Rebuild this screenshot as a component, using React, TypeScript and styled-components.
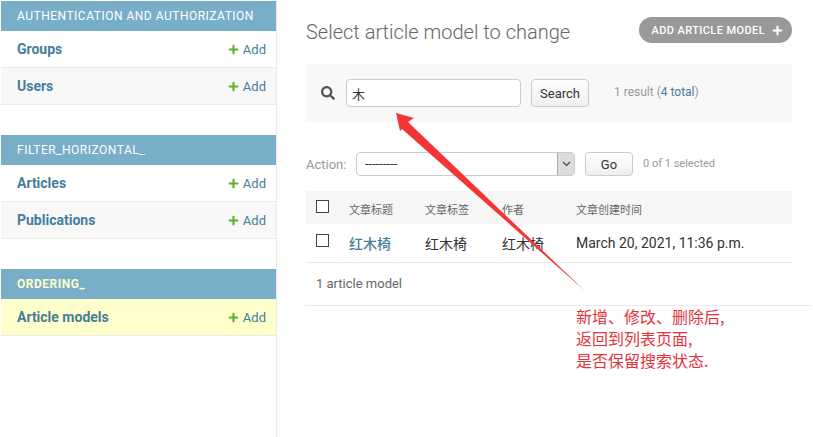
import React from 'react'
import styled, { createGlobalStyle } from 'styled-components'
import { FaPlus, FaSearch } from 'react-icons/fa'

const GlobalStyle = createGlobalStyle`
  html, body {
    margin: 0;
    padding: 0;
    background: #fff;
    overflow: hidden;
  }
  body {
    font-family: Roboto, "Noto Sans CJK SC", sans-serif;
    color: #333;
  }
`

const Page = styled.div`
  position: relative;
  display: flex;
  width: 813px;
  height: 437px;
  overflow: hidden;
`

const Sidebar = styled.nav`
  box-sizing: border-box;
  flex: 0 0 277px;
  padding: 1px 0 0 1px;
  border-right: 1px solid #eaeaea;
`

const Module = styled.section`
  margin-bottom: 30px;
`

const Caption = styled.div<{ $current?: boolean }>`
  box-sizing: border-box;
  height: 30px;
  padding: 0 16px;
  display: flex;
  align-items: center;
  background: #79aec8;
  color: ${(p) => (p.$current ? '#ffffcc' : '#fff')};
  font-size: 12px;
  font-weight: ${(p) => (p.$current ? 700 : 400)};
  letter-spacing: 0.5px;
`

const ModelRow = styled.div<{ $alt?: boolean; $current?: boolean }>`
  box-sizing: border-box;
  height: 37px;
  padding: 0 10px 1px 16px;
  display: flex;
  align-items: center;
  justify-content: space-between;
  border-bottom: 1px solid #eaeaea;
  background: ${(p) => (p.$current ? '#ffffcc' : p.$alt ? '#f8f8f8' : '#fff')};
`

const ModelName = styled.a`
  color: #447e9b;
  font-size: 14px;
  font-weight: 700;
`

const AddLink = styled.a`
  display: flex;
  align-items: center;
  gap: 4px;
  margin-top: 1px;
  color: #447e9b;
  font-size: 13px;
  svg {
    color: #5fae2b;
    font-size: 11px;
  }
`

const Main = styled.main`
  box-sizing: border-box;
  flex: 1;
  padding: 17px 21px 0 29px;
  min-width: 0;
`

const TitleRow = styled.div`
  display: flex;
  justify-content: space-between;
  align-items: flex-start;
  height: 47px;
`

const Title = styled.h1`
  margin: 3px 0 0;
  color: #666;
  font-size: 20px;
  font-weight: 300;
  line-height: 24px;
`

const AddButton = styled.a`
  box-sizing: border-box;
  display: flex;
  align-items: center;
  gap: 7px;
  height: 26px;
  padding: 0 9px 0 13px;
  border-radius: 13px;
  background: #999;
  color: #fff;
  font-size: 11px;
  font-weight: 500;
  letter-spacing: 0.4px;
  svg {
    font-size: 11px;
  }
`

const Toolbar = styled.div`
  box-sizing: border-box;
  display: flex;
  align-items: center;
  height: 58px;
  padding: 0 0 0 15px;
  background: #f8f8f8;
  svg {
    color: #555;
    font-size: 14px;
  }
`

const SearchInput = styled.div`
  box-sizing: border-box;
  width: 175px;
  height: 28px;
  margin-left: 11px;
  padding: 0 5px;
  display: flex;
  align-items: center;
  border: 1px solid #ccc;
  border-radius: 4px;
  background: #fff;
  color: #333;
  font-size: 13px;
`

const Button = styled.span<{ $width: number; $height: number }>`
  box-sizing: border-box;
  width: ${(p) => p.$width}px;
  height: ${(p) => p.$height}px;
  margin-left: 10px;
  display: flex;
  align-items: center;
  justify-content: center;
  border: 1px solid #ccc;
  border-radius: 4px;
  background: linear-gradient(#fff, #efefef);
  color: #333;
  font-size: 13px;
`

const Note = styled.span`
  color: #999;
  font-size: 12px;
`

const ResultNote = styled(Note)`
  margin: -3px 0 0 25px;
`

const SelectedNote = styled(Note)`
  margin: -1px 0 0 10px;
  font-size: 11px;
`

const TotalLink = styled.a`
  color: #447e9b;
`

const Actions = styled.div`
  display: flex;
  align-items: center;
  height: 24px;
  margin-top: 30px;
`

const ActionLabel = styled.span`
  width: 50px;
  color: #999;
  font-size: 13px;
`

const Select = styled.div`
  box-sizing: border-box;
  width: 219px;
  height: 24px;
  display: flex;
  align-items: stretch;
  justify-content: space-between;
  padding-left: 8px;
  border: 1px solid #ccc;
  border-radius: 4px;
  background: #fff;
  color: #333;
  font-size: 13px;
  line-height: 22px;
`

const SelectArrow = styled.span`
  width: 16px;
  display: flex;
  align-items: center;
  justify-content: center;
  border-left: 1px solid #aaa;
  background: #ddd;
`

const Table = styled.div`
  margin-top: 15px;
`

const Row = styled.div<{ $head?: boolean }>`
  box-sizing: border-box;
  display: grid;
  grid-template-columns: 43px 76px 77px 74px 1fr;
  align-items: center;
  height: ${(p) => (p.$head ? 33 : 39)}px;
  padding-top: ${(p) => (p.$head ? 2 : 0)}px;
  background: ${(p) => (p.$head ? '#f6f6f6' : '#fff')};
  border-bottom: ${(p) => (p.$head ? 'none' : '1px solid #eaeaea')};
`

const Checkbox = styled.span`
  box-sizing: border-box;
  display: block;
  width: 13px;
  height: 13px;
  margin: -5px 0 0 10px;
  border: 1px solid #444;
  background: #fff;
`

const HeadCell = styled.span`
  color: #666;
  font-size: 11px;
`

const Cell = styled.span`
  color: #333;
  font-size: 14px;
`

const CellLink = styled(Cell)`
  color: #447e9b;
  font-weight: 500;
`

const Paginator = styled.div`
  box-sizing: border-box;
  height: 43px;
  margin: 0 -20px 0 -1px;
  padding: 12px 0 0 11px;
  border-bottom: 1px solid #eaeaea;
  color: #666;
  font-size: 13px;
  line-height: 18px;
`

const ArrowOverlay = styled.svg`
  position: absolute;
  left: 0;
  top: 0;
  pointer-events: none;
`

const Annotation = styled.div`
  position: absolute;
  left: 576px;
  top: 305px;
  color: #e5333c;
  font-family: "Noto Sans CJK SC", sans-serif;
  font-size: 16px;
  line-height: 22px;
`

const modules = [
  { caption: 'AUTHENTICATION AND AUTHORIZATION', models: ['Groups', 'Users'] },
  { caption: 'FILTER_HORIZONTAL_', models: ['Articles', 'Publications'] },
  { caption: 'ORDERING_', models: ['Article models'], current: true }
]

const App = () => {
  return (
    <Page>
      <GlobalStyle />
      <Sidebar>
        {modules.map((m) => (
          <Module key={m.caption}>
            <Caption $current={m.current}>{m.caption}</Caption>
            {m.models.map((name, i) => (
              <ModelRow key={name} $alt={i % 2 === 1} $current={m.current}>
                <ModelName>{name}</ModelName>
                <AddLink>
                  <FaPlus />
                  Add
                </AddLink>
              </ModelRow>
            ))}
          </Module>
        ))}
      </Sidebar>
      <Main>
        <TitleRow>
          <Title>Select article model to change</Title>
          <AddButton>
            ADD ARTICLE MODEL
            <FaPlus />
          </AddButton>
        </TitleRow>
        <Toolbar>
          <FaSearch />
          <SearchInput>木</SearchInput>
          <Button $width={58} $height={28}>Search</Button>
          <ResultNote>
            1 result (<TotalLink>4 total</TotalLink>)
          </ResultNote>
        </Toolbar>
        <Actions>
          <ActionLabel>Action:</ActionLabel>
          <Select>
            ---------
            <SelectArrow>
              <svg width="9" height="6" viewBox="0 0 9 6">
                <path d="M1 1l3.5 3.5L8 1" fill="none" stroke="#444" strokeWidth="1.1" />
              </svg>
            </SelectArrow>
          </Select>
          <Button $width={48} $height={24}>Go</Button>
          <SelectedNote>0 of 1 selected</SelectedNote>
        </Actions>
        <Table>
          <Row $head>
            <Checkbox />
            <HeadCell>文章标题</HeadCell>
            <HeadCell>文章标签</HeadCell>
            <HeadCell>作者</HeadCell>
            <HeadCell>文章创建时间</HeadCell>
          </Row>
          <Row>
            <Checkbox />
            <CellLink>红木椅</CellLink>
            <Cell>红木椅</Cell>
            <Cell>红木椅</Cell>
            <Cell>March 20, 2021, 11:36 p.m.</Cell>
          </Row>
        </Table>
        <Paginator>1 article model</Paginator>
      </Main>
      <ArrowOverlay width="813" height="437" viewBox="0 0 813 437">
        <polygon points="396,113 414,118 408,122 585,291 402,129 400,131" fill="#f33535" />
      </ArrowOverlay>
      <Annotation>
        新增、修改、删除后,
        <br />
        返回到列表页面,
        <br />
        是否保留搜索状态.
      </Annotation>
    </Page>
  )
}

export default App
